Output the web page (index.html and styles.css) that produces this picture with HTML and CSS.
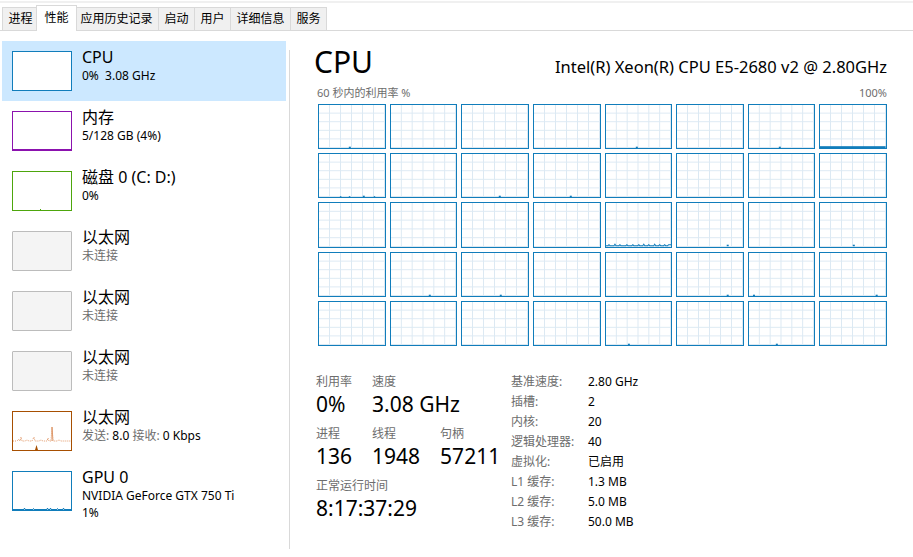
FILE: index.html
```html
<!DOCTYPE html>
<html lang="zh-CN">
<head>
<meta charset="utf-8">
<title>任务管理器 - 性能</title>
<link rel="stylesheet" href="styles.css">
</head>
<body>
<div class="frame-top"></div>
<nav class="tabs">
  <div class="tab">进程</div>
  <div class="tab active">性能</div>
  <div class="tab">应用历史记录</div>
  <div class="tab">启动</div>
  <div class="tab">用户</div>
  <div class="tab">详细信息</div>
  <div class="tab">服务</div>
</nav>
<div class="main">
  <aside class="sidebar">
    <div class="item selected">
      <div class="thumb thumb-cpu"></div>
      <div class="info"><div class="name">CPU</div><div class="sub">0%&nbsp; 3.08 GHz</div></div>
    </div>
    <div class="item">
      <div class="thumb thumb-mem"></div>
      <div class="info"><div class="name">内存</div><div class="sub">5/128 GB (4%)</div></div>
    </div>
    <div class="item">
      <div class="thumb thumb-disk"><svg viewBox="0 0 58 38" preserveAspectRatio="none"><rect x="27" y="37" width="1" height="1" fill="#4da60c"/></svg></div>
      <div class="info"><div class="name">磁盘 0 (C: D:)</div><div class="sub">0%</div></div>
    </div>
    <div class="item">
      <div class="thumb thumb-off"></div>
      <div class="info"><div class="name">以太网</div><div class="sub muted">未连接</div></div>
    </div>
    <div class="item">
      <div class="thumb thumb-off"></div>
      <div class="info"><div class="name">以太网</div><div class="sub muted">未连接</div></div>
    </div>
    <div class="item">
      <div class="thumb thumb-off"></div>
      <div class="info"><div class="name">以太网</div><div class="sub muted">未连接</div></div>
    </div>
    <div class="item">
      <div class="thumb thumb-eth">
        <svg viewBox="0 0 58 38" preserveAspectRatio="none">
          <polyline class="eth-line" points="0,29 4,29 6,27 7,29 8,25 9,29 12,29 14,28 16,29 19,29 20,27 21,25 22,29 26,29 28,28 30,29 34,29 35,26 36,29 38,29 39,15 40,29 44,29 46,28 48,29 58,29"/>
          <polyline class="eth-spike" points="39,29 39,15 40,29"/>
          <polygon class="eth-fill" points="22,38 23.5,33 25,38"/>
        </svg>
      </div>
      <div class="info"><div class="name">以太网</div><div class="sub"><span class="muted">发送:</span> 8.0 <span class="muted">接收:</span> 0 Kbps</div></div>
    </div>
    <div class="item">
      <div class="thumb thumb-gpu">
        <svg viewBox="0 0 58 38" preserveAspectRatio="none">
          <polyline class="gpu-line" points="0,37.5 11,37.5 11.5,36 12,37.5 20,37.5 20.5,36.5 21,37.5 34,37.5 34.5,36 35,37.5 37,37.5 37.5,36 38,37.5 44,37.5 44.5,36.5 45,37.5 50,37.5 50.5,36 51,37.5 58,37.5"/>
        </svg>
      </div>
      <div class="info"><div class="name">GPU 0</div><div class="sub">NVIDIA GeForce GTX 750 Ti</div><div class="sub">1%</div></div>
    </div>
  </aside>
  <div class="divider"></div>
  <section class="detail">
    <header class="detail-head">
      <h1>CPU</h1>
      <div class="model">Intel(R) Xeon(R) CPU E5-2680 v2 @ 2.80GHz</div>
    </header>
    <div class="axis"><span>60 秒内的利用率 %</span><span>100%</span></div>
    <div class="cores">
      <!-- row 1 -->
      <div class="core"><svg viewBox="0 0 66 43" preserveAspectRatio="none"><rect x="30" y="41.5" width="2" height="1.5"/></svg></div>
      <div class="core"></div>
      <div class="core"></div>
      <div class="core"></div>
      <div class="core"><svg viewBox="0 0 66 43" preserveAspectRatio="none"><rect x="30" y="41.5" width="2" height="1.5"/></svg></div>
      <div class="core"></div>
      <div class="core"><svg viewBox="0 0 66 43" preserveAspectRatio="none"><rect x="30" y="41.5" width="2" height="1.5"/></svg></div>
      <div class="core"><svg viewBox="0 0 66 43" preserveAspectRatio="none"><rect x="0" y="41" width="66" height="2"/></svg></div>
      <!-- row 2 -->
      <div class="core"><svg viewBox="0 0 66 43" preserveAspectRatio="none"><rect x="21" y="42" width="1.5" height="1"/><rect x="30" y="42" width="1.5" height="1"/><rect x="44" y="41.5" width="2" height="1.5"/><rect x="55" y="42" width="1.5" height="1"/></svg></div>
      <div class="core"></div>
      <div class="core"><svg viewBox="0 0 66 43" preserveAspectRatio="none"><rect x="37" y="41.5" width="2" height="1.5"/></svg></div>
      <div class="core"><svg viewBox="0 0 66 43" preserveAspectRatio="none"><rect x="36" y="41.5" width="2" height="1.5"/></svg></div>
      <div class="core"></div>
      <div class="core"></div>
      <div class="core"></div>
      <div class="core"></div>
      <!-- row 3 -->
      <div class="core"></div>
      <div class="core"></div>
      <div class="core"></div>
      <div class="core"></div>
      <div class="core"><svg viewBox="0 0 66 43" preserveAspectRatio="none"><polyline class="noise" points="0,42.5 2,42.5 3,41.5 4,42.5 8,42.5 9,41 10,42.5 13,42.5 14,41.5 15,42.5 18,42.5 20,42.5 21,41.5 22,42.5 26,42.5 27,41.5 28,42.5 32,42.5 33,41.5 34,42.5 37,42.5 38,41 39,42.5 42,42.5 43,41.5 44,42.5 48,42.5 49,41 50,42.5 53,42.5 54,41.5 55,42.5 58,42.5 59,41.5 60,42.5 62,42.5 63,41.5 66,41.5"/></svg></div>
      <div class="core"><svg viewBox="0 0 66 43" preserveAspectRatio="none"><rect x="50" y="41.5" width="2" height="1.5"/></svg></div>
      <div class="core"></div>
      <div class="core"><svg viewBox="0 0 66 43" preserveAspectRatio="none"><rect x="33" y="41.5" width="2" height="1.5"/></svg></div>
      <!-- row 4 -->
      <div class="core"></div>
      <div class="core"><svg viewBox="0 0 66 43" preserveAspectRatio="none"><rect x="38" y="41.5" width="2" height="1.5"/></svg></div>
      <div class="core"><svg viewBox="0 0 66 43" preserveAspectRatio="none"><rect x="38" y="41.5" width="2" height="1.5"/></svg></div>
      <div class="core"></div>
      <div class="core"></div>
      <div class="core"><svg viewBox="0 0 66 43" preserveAspectRatio="none"><rect x="50" y="41.5" width="2" height="1.5"/></svg></div>
      <div class="core"><svg viewBox="0 0 66 43" preserveAspectRatio="none"><rect x="4" y="41.5" width="2" height="1.5"/></svg></div>
      <div class="core"><svg viewBox="0 0 66 43" preserveAspectRatio="none"><rect x="56" y="41.5" width="2" height="1.5"/></svg></div>
      <!-- row 5 -->
      <div class="core"></div>
      <div class="core"></div>
      <div class="core"></div>
      <div class="core"></div>
      <div class="core"><svg viewBox="0 0 66 43" preserveAspectRatio="none"><rect x="22" y="41.5" width="2" height="1.5"/></svg></div>
      <div class="core"></div>
      <div class="core"><svg viewBox="0 0 66 43" preserveAspectRatio="none"><rect x="27" y="41.5" width="2" height="1.5"/></svg></div>
      <div class="core"></div>
    </div>
    <div class="stats">
      <div class="stats-left">
        <div class="stat-row">
          <div class="stat"><div class="label">利用率</div><div class="value">0%</div></div>
          <div class="stat"><div class="label">速度</div><div class="value">3.08 GHz</div></div>
        </div>
        <div class="stat-row">
          <div class="stat"><div class="label">进程</div><div class="value">136</div></div>
          <div class="stat"><div class="label">线程</div><div class="value">1948</div></div>
          <div class="stat"><div class="label">句柄</div><div class="value">57211</div></div>
        </div>
        <div class="stat-row">
          <div class="stat"><div class="label">正常运行时间</div><div class="value">8:17:37:29</div></div>
        </div>
      </div>
      <dl class="specs">
        <dt>基准速度:</dt><dd>2.80 GHz</dd>
        <dt>插槽:</dt><dd>2</dd>
        <dt>内核:</dt><dd>20</dd>
        <dt>逻辑处理器:</dt><dd>40</dd>
        <dt>虚拟化:</dt><dd>已启用</dd>
        <dt>L1 缓存:</dt><dd>1.3 MB</dd>
        <dt>L2 缓存:</dt><dd>5.0 MB</dd>
        <dt>L3 缓存:</dt><dd>50.0 MB</dd>
      </dl>
    </div>
  </section>
</div>
</body>
</html>
```
FILE: styles.css
```css
* {
  box-sizing: border-box;
  margin: 0;
  padding: 0;
}

html, body {
  width: 913px;
  height: 557px;
  overflow: hidden;
  background: #fff;
}

body {
  font-family: "Segoe UI", "Noto Sans", "Noto Sans CJK SC", sans-serif;
  color: #000;
}

.frame-top {
  height: 2px;
  margin-top: 1px;
  background: #f0f0f0;
}

/* tabs */
.tabs {
  display: flex;
  align-items: flex-end;
  height: 26px;
  margin-top: 2px;
  padding-left: 3px;
  border-bottom: 1px solid #d9d9d9;
}

.tab {
  height: 23px;
  line-height: 22px;
  padding: 0 5.5px;
  margin-left: -1px;
  border: 1px solid #d9d9d9;
  border-bottom: 0;
  background: #f0f0f0;
  font-size: 12px;
  white-space: nowrap;
}

.tab.active {
  position: relative;
  z-index: 1;
  height: 26px;
  line-height: 24px;
  margin: 0 -2px -1px -3px;
  padding: 0 7.5px;
  background: #fff;
}

/* layout */
.main {
  display: flex;
  height: 526px;
}

.sidebar {
  flex: none;
  width: 289px;
  padding: 10px 0 0 2px;
}

.item {
  display: flex;
  gap: 10px;
  width: 284px;
  height: 60px;
  padding: 10px 10px 0;
}

.item.selected {
  background: #cce8ff;
}

.thumb {
  flex: none;
  width: 60px;
  height: 40px;
  border: 1px solid #117dbb;
  background: #fff;
}

.thumb svg {
  display: block;
  width: 100%;
  height: 100%;
}

.thumb-mem {
  border-color: #8b12ae;
  box-shadow: inset 0 -1px 0 #8b12ae;
}

.thumb-disk {
  border-color: #4da60c;
}

.thumb-off {
  border-color: #bcbcbc;
  border-radius: 1px;
  background: #f4f4f4;
}

.thumb-eth {
  border-color: #a74f01;
}

.eth-line {
  fill: none;
  stroke: #e39b6c;
  stroke-width: 1;
  stroke-dasharray: 1 1;
}

.eth-spike {
  fill: none;
  stroke: #d27b43;
  stroke-width: 0.8;
  stroke-dasharray: 1 1;
}

.eth-fill {
  fill: #a74f01;
}

.gpu-line {
  fill: none;
  stroke: #117dbb;
  stroke-width: 1;
}

.info {
  min-width: 0;
}

.name {
  margin-top: -4px;
  font-size: 16px;
  line-height: 20px;
  white-space: nowrap;
}

.sub {
  font-size: 12px;
  line-height: 17px;
  white-space: nowrap;
}

.muted {
  color: #6d6d6d;
}

.divider {
  flex: none;
  width: 1px;
  margin: 19px 0 8px;
  background: #d9d9d9;
}

/* detail */
.detail {
  flex: 1;
  min-width: 0;
  padding: 11px 26px 0 27px;
}

.detail-head {
  display: flex;
  justify-content: space-between;
  align-items: baseline;
}

.detail-head h1 {
  margin-left: -3px;
  font-size: 30px;
  font-weight: normal;
  line-height: 40px;
}

.model {
  font-size: 16.5px;
  line-height: 20px;
  white-space: nowrap;
}

.axis {
  display: flex;
  justify-content: space-between;
  margin-top: 4px;
  font-size: 11px;
  line-height: 14px;
  color: #6d6d6d;
}

.cores {
  display: grid;
  grid-template-columns: repeat(8, 1fr);
  grid-template-rows: repeat(5, 1fr);
  gap: 4px;
  height: 242px;
  margin: 4px 0 0 1px;
}

.core {
  border: 1px solid #117dbb;
  background-color: #fff;
  background-image:
    linear-gradient(to right, transparent calc(100% - 1px), #dce9f3 calc(100% - 1px)),
    linear-gradient(to bottom, transparent calc(100% - 1px), #dce9f3 calc(100% - 1px));
  background-size: calc(100% / 6) calc(100% / 5);
}

.core svg {
  display: block;
  width: 100%;
  height: 100%;
}

.core rect {
  fill: #117dbb;
}

.core .noise {
  fill: none;
  stroke: #117dbb;
  stroke-width: 1;
}

/* stats */
.stats {
  display: flex;
  margin-top: 26px;
}

.stats-left {
  flex: none;
  width: 195px;
  padding-top: 2px;
  margin-left: -1px;
}

.stat-row {
  display: flex;
  gap: 20px;
}

.stat-row + .stat-row {
  margin-top: 8px;
}

.label {
  font-size: 12px;
  line-height: 16px;
  color: #6d6d6d;
  white-space: nowrap;
}

.value {
  font-size: 21px;
  line-height: 28px;
  white-space: nowrap;
}

.specs {
  display: grid;
  grid-template-columns: 77px auto;
  font-size: 12px;
  line-height: 20px;
}

.specs dt {
  color: #6d6d6d;
  white-space: nowrap;
}

.specs dd {
  color: #000;
  white-space: nowrap;
}
```
